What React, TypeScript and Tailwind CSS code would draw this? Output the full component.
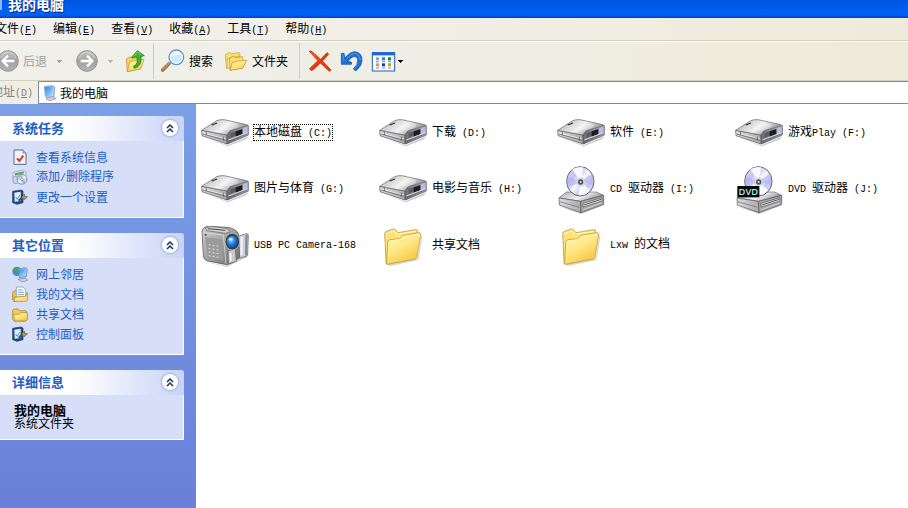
import { useState } from "react";
import type { ReactNode } from "react";

// Latin runs sit on a half-width grid next to the full-width characters
function Label({ text }: { text: string }) {
  return (
    <span className="whitespace-pre">
      {text.split(/([\x20-\x7e]+)/).map((part, i) =>
        /^[\x20-\x7e]+$/.test(part) ? (
          <span key={i} className="font-['Liberation_Mono','Noto_Sans_CJK_SC',monospace] text-[10px]">
            {part}
          </span>
        ) : (
          part
        )
      )}
    </span>
  );
}

function Gradients() {
  return (
    <svg className="absolute h-0 w-0" aria-hidden="true">
      <defs>
        <linearGradient id="metalTop" x1="0" y1="0" x2="1" y2="0.4">
          <stop offset="0" stopColor="#a6a6a8" />
          <stop offset="0.4" stopColor="#dcdcdd" />
          <stop offset="0.6" stopColor="#f2f2f3" />
          <stop offset="1" stopColor="#8f8f94" />
        </linearGradient>
        <linearGradient id="metalSide" x1="0" y1="0" x2="1" y2="0">
          <stop offset="0" stopColor="#dededf" />
          <stop offset="1" stopColor="#aaaaad" />
        </linearGradient>
        <linearGradient id="metalFront" x1="0" y1="0" x2="1" y2="0">
          <stop offset="0" stopColor="#6d6d72" />
          <stop offset="1" stopColor="#b4b4c4" />
        </linearGradient>
        <linearGradient id="folderFront" x1="0" y1="0" x2="0.6" y2="1">
          <stop offset="0" stopColor="#fff6b4" />
          <stop offset="0.5" stopColor="#ffe988" />
          <stop offset="1" stopColor="#f4c742" />
        </linearGradient>
        <linearGradient id="disc" x1="0" y1="0" x2="1" y2="1">
          <stop offset="0" stopColor="#dcdcf8" />
          <stop offset="0.3" stopColor="#c3c3f3" />
          <stop offset="0.5" stopColor="#f8f8ff" />
          <stop offset="0.7" stopColor="#c6c6f6" />
          <stop offset="1" stopColor="#e6e6fb" />
        </linearGradient>
        <linearGradient id="grayBall" x1="0" y1="0" x2="0" y2="1">
          <stop offset="0" stopColor="#c4c4c4" />
          <stop offset="0.5" stopColor="#a2a2a2" />
          <stop offset="1" stopColor="#b4b4b4" />
        </linearGradient>
        <radialGradient id="lens" cx="0.4" cy="0.35" r="0.7">
          <stop offset="0" stopColor="#8fd0ff" />
          <stop offset="0.5" stopColor="#1f7ce0" />
          <stop offset="1" stopColor="#083a8c" />
        </radialGradient>
        <linearGradient id="blueScreen" x1="0" y1="0" x2="1" y2="1">
          <stop offset="0" stopColor="#2c7be8" />
          <stop offset="0.6" stopColor="#6fc0fb" />
          <stop offset="1" stopColor="#b7e5ff" />
        </linearGradient>
        <linearGradient id="camBody" x1="0" y1="0" x2="1" y2="1">
          <stop offset="0" stopColor="#d0d0d0" />
          <stop offset="0.5" stopColor="#a2a2a2" />
          <stop offset="1" stopColor="#6b6b6b" />
        </linearGradient>
      </defs>
    </svg>
  );
}

function DriveIcon() {
  return (
    <svg viewBox="15 348 144 144" className="size-12 shrink-0 overflow-visible" aria-hidden="true">
      <g transform="translate(0 332)">
        <path d="M22 103 L94 128 L157 101 L150 110 L95 131 Z" fill="#b0b0b0" opacity="0.7" />
        <path d="M17 83 L93 97 L93 124 L18 99 Z" fill="url(#metalSide)" stroke="#505054" strokeWidth="2" strokeLinejoin="round" />
        <path d="M93 97 L104 82 L146 68 L157 69 L157 97 L94 124 Z" fill="url(#metalFront)" stroke="#48484e" strokeWidth="2" strokeLinejoin="round" />
        <path d="M17 83 L62 54 Q72 50 84 51 L148 65 Q156 66 155 69 L106 83 Q96 86 93 97 Z" fill="url(#metalTop)" stroke="#636367" strokeWidth="2" strokeLinejoin="round" />
        <path d="M68 80 Q92 60 122 63 Q134 68 112 79 Q94 85 68 80 Z" fill="#fff" opacity="0.3" />
        <path d="M47 67 L63 61" stroke="#2b2b2b" strokeWidth="4" />
        <path d="M20 91 L90 109" stroke="#f4f4f4" strokeWidth="2" />
        <path d="M20 94 L90 113 M31 87 L31 97 M82 102 L82 114" stroke="#4c4c50" strokeWidth="2" />
        <path d="M104 91 L120 86 L120 99 L103 106 Z" fill="#5c5c62" />
        <path d="M119 86 L139 79 L139 95 L119 102 Z" fill="#1d1d20" />
        <path d="M141 77 L154 73 L154 93 L141 98 Z" fill="#bdb9e6" />
        <path d="M97 112 L154 90" stroke="#d9d9de" strokeWidth="3" />
        <path d="M97 117 L154 94" stroke="#5a5a60" strokeWidth="2" />
      </g>
    </svg>
  );
}

function DiscIcon({ dvd }: { dvd?: boolean }) {
  return (
    <svg viewBox="21 180 144 144" className="size-12 shrink-0 overflow-visible" aria-hidden="true">
      <path d="M30 308 L94 330 L163 303 L158 300 L92 322 Z" fill="#b5b5b5" opacity="0.7" />
      <path d="M27 282 L49 264 L139 264 L161 274 L92 292 Z" fill="url(#metalTop)" stroke="#66666a" strokeWidth="2" strokeLinejoin="round" />
      <path d="M27 282 L92 292 L93 326 L28 303 Z" fill="url(#metalSide)" stroke="#515155" strokeWidth="2" strokeLinejoin="round" />
      <path d="M92 292 L161 274 L161 301 L93 326 Z" fill="#a9a9ac" stroke="#515155" strokeWidth="2" strokeLinejoin="round" />
      <path d="M29 293 L88 310" stroke="#66666a" strokeWidth="2" />
      <path d="M99 298 L156 281 L156 291 L99 309 Z" fill="#f2f2f4" stroke="#4b4b4f" strokeWidth="2" />
      <path d="M101 303 L154 286" stroke="#4b4b50" strokeWidth="3" />
      <path d="M100 317 L155 297" stroke="#dededf" strokeWidth="2" />
      <ellipse cx="91" cy="232" rx="41" ry="44" fill="url(#disc)" stroke="#62626e" strokeWidth="3" />
      <path d="M91 232 L67 196 Q84 187 100 190 Z M91 232 L86 274 Q108 275 120 258 Z" fill="#fff" opacity="0.85" />
      <path d="M91 232 L53 218 Q48 238 56 252 Z" fill="#aaaaf0" opacity="0.55" />
      <path d="M91 232 L125 210 Q133 225 129 244 Z" fill="#aaaaf0" opacity="0.5" />
      <circle cx="92" cy="234" r="13" fill="#dddde5" stroke="#b0b0c0" strokeWidth="1" />
      <circle cx="92" cy="234" r="8" fill="#505057" />
      <circle cx="92" cy="234" r="3" fill="#e8e8ee" />
      {dvd && (
        <>
          <rect x="28" y="246" width="66" height="34" fill="#050505" />
          <text x="61" y="273" textAnchor="middle" fontFamily="Open Sans, sans-serif" fontSize="28" fontWeight="600" fill="#a9f0ee">
            DVD
          </text>
        </>
      )}
    </svg>
  );
}

function FolderIcon() {
  return (
    <svg viewBox="27 348 144 144" className="size-12 shrink-0 overflow-visible" aria-hidden="true">
      <path d="M52 481 L144 464 L154 392 L157 396 L146 468 L60 486 Z" fill="#a9a9a9" opacity="0.5" />
      <path d="M44 389 Q44 384 49 382 L70 375 Q74 374 77 378 L84 386 L136 377 Q143 376 143 382 L143 394 L134 462 L51 480 Q48 480 48 476 Z" fill="#fbe27c" stroke="#b48a22" strokeWidth="2" />
      <path d="M48 391 L71 380 L81 391 L138 382" fill="none" stroke="#fff6c0" strokeWidth="3" />
      <path d="M53 414 Q54 408 61 407 L89 404 L99 394 L147 386 Q153 386 152 392 L141 460 Q140 464 136 465 L52 481 Q49 481 50 477 Z" fill="url(#folderFront)" stroke="#b88c20" strokeWidth="2" />
      <path d="M57 415 Q58 411 64 410 L91 407 L101 398 L147 390" fill="none" stroke="#fffbe0" strokeWidth="2" />
    </svg>
  );
}

function CameraIcon() {
  return (
    <svg viewBox="15 348 144 144" className="size-12 shrink-0 overflow-visible" aria-hidden="true">
      <path d="M30 474 L90 485 L132 462 L155 452 L152 460 L92 489 Z" fill="#9a9a9a" opacity="0.5" />
      <path d="M128 396 L152 389 Q157 389 157 394 L155 452 Q155 456 151 457 L128 463 Z" fill="#cfcfdf" stroke="#55555c" strokeWidth="2" />
      <path d="M134 400 L140 397 L139 452 L134 455 Z" fill="#f8f8fc" />
      <path d="M148 394 L155 391 L153 453 L147 455 Z" fill="#898994" />
      <path d="M18 382 Q20 370 32 367 L96 370 Q118 374 127 388 L131 458 Q120 474 92 482 L34 471 Q22 466 22 455 Z" fill="url(#camBody)" stroke="#4a4a4c" strokeWidth="2" />
      <path d="M29 372 Q40 365 52 368 L86 372 Q98 375 103 384 L88 388 L32 380 Z" fill="#cfcfcf" stroke="#5c5c5c" strokeWidth="2" />
      <path d="M36 374 L88 379" stroke="#4c4c4c" strokeWidth="3" />
      <path d="M22 386 L82 393 L90 480" fill="none" stroke="#e2e2e2" strokeWidth="2" />
      <path d="M28 400 L76 407 L83 470 L37 462 Z" fill="#9c9c9c" stroke="#858585" strokeWidth="1" />
      {[425, 436, 447, 458].map((y) => (
        <path key={y} d={`M38 ${y - 3} l5 1 M50 ${y - 1} l5 1 M62 ${y + 1} l5 1`} stroke="#e6e6e6" strokeWidth="3" />
      ))}
      <circle cx="29" cy="392" r="3" fill="#444" />
      <path d="M96 440 L118 434 L121 472 L97 480 Z" fill="#c9c9cb" stroke="#58585a" strokeWidth="2" />
      <path d="M101 447 L106 446 L107 471 L102 473 Z" fill="#f3f3f3" />
      <ellipse cx="109" cy="413" rx="22" ry="25" fill="#3b3b3e" stroke="#b2b2b4" strokeWidth="3" />
      <ellipse cx="109" cy="414" rx="17" ry="19" fill="url(#lens)" />
      <ellipse cx="104" cy="406" rx="6" ry="4" fill="#e6f6ff" opacity="0.8" />
    </svg>
  );
}

function BallIcon({ flip }: { flip?: boolean }) {
  return (
    <svg viewBox="0 0 66 66" className={flip ? "size-[22px] shrink-0 -scale-x-100" : "size-[22px] shrink-0"} aria-hidden="true">
      <circle cx="33" cy="33" r="31" fill="url(#grayBall)" stroke="#959595" strokeWidth="3" />
      <path d="M11 24 Q18 8 34 7 Q50 8 56 24" fill="none" stroke="#d6d6d6" strokeWidth="3" />
      <path d="M52 33 H18 M33 17 L17 33 L33 49" fill="none" stroke="#fff" strokeWidth="7" />
    </svg>
  );
}

function UpIcon() {
  return (
    <svg viewBox="375 148 60 66" className="h-[22px] w-5" aria-hidden="true">
      <path d="M379 175 L390 168 L396 173 L424 169 L420 204 L382 213 Z" fill="#f6d765" stroke="#b58d27" strokeWidth="2" />
      <path d="M389 183 L407 179 L432 176 L422 205 L382 213 Z" fill="url(#folderFront)" stroke="#b58d27" strokeWidth="2" />
      <path d="M400 197 Q417 190 410 169 L394 171 L412 150 L433 165 L422 168 Q428 195 403 203 Z" fill="#3eb32f" stroke="#187212" strokeWidth="2" strokeLinejoin="round" />
      <path d="M402 167 L412 154 L424 163" fill="none" stroke="#8fe07c" strokeWidth="2" />
    </svg>
  );
}

function SearchIcon() {
  return (
    <svg viewBox="483 148 72 72" className="size-6" aria-hidden="true">
      <path d="M488 211 L507 192" stroke="#8c5630" strokeWidth="10" strokeLinecap="round" />
      <path d="M488 210 L506 192" stroke="#d98f55" strokeWidth="6" strokeLinecap="round" />
      <path d="M504 194 L511 187" stroke="#8fa3b8" strokeWidth="6" />
      <circle cx="529" cy="173" r="22" fill="#c9ecfc" stroke="#6c93bd" strokeWidth="4" />
      <circle cx="529" cy="173" r="18" fill="none" stroke="#eefaff" strokeWidth="3" />
      <path d="M515 171 Q517 158 530 157 Q540 158 542 166 Q528 162 515 171 Z" fill="#fff" />
    </svg>
  );
}

function FoldersIcon() {
  return (
    <svg viewBox="672 152 72 66" className="h-[22px] w-6" aria-hidden="true">
      <path d="M676 166 L689 159 L694 163 L718 160 L720 166 L718 194 L680 207 Z" fill="#fbe070" stroke="#c59a2a" strokeWidth="2" />
      <path d="M682 178 L697 173 L719 170 L714 199 L681 207 Z" fill="#fff0a0" stroke="#c59a2a" strokeWidth="2" />
      <path d="M688 178 L700 170 L706 175 L728 172 L729 180 L724 204 L690 213 Z" fill="#fbdf70" stroke="#b88d26" strokeWidth="2" />
      <path d="M697 190 L714 185 L740 183 L728 207 L690 213 Z" fill="url(#folderFront)" stroke="#b88d26" strokeWidth="2" />
    </svg>
  );
}

function DeleteIcon() {
  return (
    <svg viewBox="24 148 72 66" className="h-[22px] w-6" aria-hidden="true">
      <path d="M28 152 Q34 149 38 155 L62 176 L81 156 L86 160 L67 181 L93 208 L89 212 L61 187 L38 208 Q31 211 29 204 L54 180 Z" fill="#ea3a0c" stroke="#d83208" strokeWidth="3" strokeLinejoin="round" />
      <path d="M33 155 L59 178" stroke="#ff8052" strokeWidth="2" />
    </svg>
  );
}

function UndoIcon() {
  return (
    <svg viewBox="120 148 69 66" className="h-[22px] w-[23px]" aria-hidden="true">
      <path d="M124 158 L132 158 L135 173 Q148 153 165 153 Q187 156 186 180 Q185 197 167 211 L160 205 Q175 192 173 177 Q171 166 160 168 Q151 171 144 182 L155 185 L154 191 L124 191 Z" fill="#1e72d2" stroke="#0d479f" strokeWidth="2" strokeLinejoin="round" />
      <path d="M128 161 L132 180 M141 174 Q152 157 167 158 Q180 163 181 178" fill="none" stroke="#6bb2f4" strokeWidth="2" />
    </svg>
  );
}

function ViewsIcon() {
  return (
    <svg viewBox="213 152 75 63" className="h-[21px] w-[25px]" aria-hidden="true">
      <rect x="217" y="157" width="67" height="55" fill="#f5faff" stroke="#1f5fc4" strokeWidth="3" />
      <rect x="216" y="156" width="69" height="9" fill="#1c66d8" />
      <path d="M228 171 h9 v9 h-9z" fill="#8fa0c8" />
      <path d="M246 171 h9 v9 h-9z" fill="#2a7fdc" />
      <path d="M264 171 h9 v9 h-9z" fill="#15862a" />
      <path d="M228 189 h9 v9 h-9z" fill="#e58a70" />
      <path d="M246 189 h9 v9 h-9z" fill="#1a3fa0" />
      <path d="M264 189 h9 v9 h-9z" fill="#c2a024" />
      <path d="M228 184 h9 M246 184 h9 M264 184 h9 M228 203 h9 M246 203 h9 M264 203 h9" stroke="#8b93a3" strokeWidth="3" />
    </svg>
  );
}

function Caret({ className }: { className?: string }) {
  return (
    <svg viewBox="0 0 5 3" className={`h-[3px] w-[5px] ${className ?? ""}`} shapeRendering="crispEdges" aria-hidden="true">
      <path d="M0 0 H5 L2.5 3 Z" fill="currentColor" />
    </svg>
  );
}

function ComputerIcon() {
  return (
    <svg viewBox="0 0 48 48" className="size-4 shrink-0" aria-hidden="true">
      <path d="M14 37 L32 34 L42 41 L24 47 L13 43 Z" fill="#d4d4dc" stroke="#85858f" strokeWidth="2" />
      <path d="M7 4 L32 2 L38 6 L36 35 L15 38 L10 34 Z" fill="#b9cbe8" stroke="#6f86b0" strokeWidth="2" />
      <path d="M9 7 L32 4 L32 32 L12 34 Z" fill="url(#blueScreen)" />
    </svg>
  );
}

function InfoIcon() {
  return (
    <svg viewBox="0 0 48 48" className="size-4 shrink-0" aria-hidden="true">
      <path d="M6 3 H33 L42 12 V46 H6 Z" fill="#f4f5fc" stroke="#5a6884" strokeWidth="3" />
      <path d="M33 3 V12 H42" fill="#cbd4e8" stroke="#5a6884" strokeWidth="2" />
      <path d="M15 28 L22 36 L34 20" fill="none" stroke="#d8381f" strokeWidth="6" />
    </svg>
  );
}

function ProgramsIcon() {
  return (
    <svg viewBox="0 0 48 48" className="size-4 shrink-0" aria-hidden="true">
      <path d="M3 10 L34 3 L42 9 V20 L12 34 L3 30 Z" fill="#e9edf4" stroke="#8792a8" strokeWidth="2" />
      <path d="M8 13 L35 7 L36 13 L9 20 Z" fill="#5da66e" />
      <path d="M3 24 L24 20 V41 L9 44 L3 40 Z" fill="#cfd6e6" stroke="#7c89a6" strokeWidth="2" />
      <circle cx="30" cy="31" r="15" fill="url(#disc)" stroke="#71739c" strokeWidth="2" />
      <path d="M30 31 L20 20 L30 17 Z M30 31 L42 40 L33 45 Z" fill="#86cf96" />
      <circle cx="30" cy="31" r="4" fill="#fff" stroke="#71739c" strokeWidth="2" />
    </svg>
  );
}

function SettingsIcon() {
  return (
    <svg viewBox="0 0 48 48" className="size-4 shrink-0" aria-hidden="true">
      <path d="M2 7 L27 3 L33 6 V41 L15 46 L2 41 Z" fill="#1d4b86" stroke="#163662" strokeWidth="2" />
      <path d="M7 11 L26 8 V36 L8 38 Z" fill="#e4f1fd" />
      <path d="M11 24 L16 31 L23 18" fill="none" stroke="#4e86c6" strokeWidth="3" />
      <path d="M20 35 L33 23" stroke="#274f85" strokeWidth="6" />
      <path d="M30 23 L37 15 L38 22 L46 23 L39 31 L31 30 Z" fill="#b99a5a" stroke="#5d5035" strokeWidth="2" />
    </svg>
  );
}

function NetworkIcon() {
  return (
    <svg viewBox="0 0 48 48" className="size-4 shrink-0" aria-hidden="true">
      <circle cx="15" cy="16" r="14" fill="#3b8ed6" />
      <path d="M3 10 Q12 0 20 4 L17 14 L8 18 Z M6 21 L16 20 L17 30 Q8 28 6 21 Z" fill="#49a84a" />
      <path d="M18 40 L40 36 L47 43 L30 48 Z" fill="#cfcfe0" stroke="#7e7e92" strokeWidth="2" />
      <path d="M17 9 L41 5 L46 9 L43 32 L22 35 Z" fill="#a9c4ea" stroke="#5b78b0" strokeWidth="2" />
      <path d="M19 11 L41 8 L40 29 L22 32 Z" fill="url(#blueScreen)" />
    </svg>
  );
}

function DocumentsIcon() {
  return (
    <svg viewBox="0 0 48 48" className="size-4 shrink-0" aria-hidden="true">
      <path d="M2 19 L10 13 H14 V43 L6 46 L2 42 Z" fill="#f2c544" stroke="#a07918" strokeWidth="2" />
      <path d="M13 3 H33 L41 11 V36 H13 Z" fill="#fff" stroke="#6d84ad" strokeWidth="2" />
      <path d="M18 12 H32 M18 19 H36 M18 26 H36" stroke="#6fa3da" strokeWidth="3" />
      <path d="M7 33 L40 31 L46 20 V42 L43 46 H6 Z" fill="#ffe27c" stroke="#a07918" strokeWidth="2" />
    </svg>
  );
}

function SmallFolderIcon() {
  return (
    <svg viewBox="0 0 48 48" className="size-4 shrink-0" aria-hidden="true">
      <path d="M2 13 L6 9 H18 L22 14 H41 L44 18 V42 L41 45 H6 L2 40 Z" fill="#f5cd50" stroke="#9c7818" strokeWidth="2" />
      <path d="M5 25 H22 L26 20 H46 V41 L42 45 H9 Z" fill="url(#folderFront)" stroke="#a8811c" strokeWidth="2" />
    </svg>
  );
}

const menus = [
  ["文件", "F"],
  ["编辑", "E"],
  ["查看", "V"],
  ["收藏", "A"],
  ["工具", "T"],
  ["帮助", "H"],
];

const items = [
  { name: "本地磁盘 (C:)", icon: <DriveIcon /> },
  { name: "下载 (D:)", icon: <DriveIcon /> },
  { name: "软件 (E:)", icon: <DriveIcon /> },
  { name: "游戏Play (F:)", icon: <DriveIcon /> },
  { name: "图片与体育 (G:)", icon: <DriveIcon /> },
  { name: "电影与音乐 (H:)", icon: <DriveIcon /> },
  { name: "CD 驱动器 (I:)", icon: <DiscIcon /> },
  { name: "DVD 驱动器 (J:)", icon: <DiscIcon dvd /> },
  { name: "USB PC Camera-168", icon: <CameraIcon /> },
  { name: "共享文档", icon: <FolderIcon /> },
  { name: "Lxw 的文档", icon: <FolderIcon /> },
];

const tasks = [
  { name: "查看系统信息", icon: <InfoIcon /> },
  { name: "添加/删除程序", icon: <ProgramsIcon /> },
  { name: "更改一个设置", icon: <SettingsIcon /> },
];

const places = [
  { name: "网上邻居", icon: <NetworkIcon /> },
  { name: "我的文档", icon: <DocumentsIcon /> },
  { name: "共享文档", icon: <SmallFolderIcon /> },
  { name: "控制面板", icon: <SettingsIcon /> },
];

function Panel({ title, children }: { title: string; children: ReactNode }) {
  const [open, setOpen] = useState(true);

  return (
    <section>
      <h2 className="flex h-[25px] items-center justify-between rounded-tr-[3px] bg-linear-to-r from-white from-40% to-[#c8d4f7] pr-1.5 pb-0.5 pl-3 text-[13px] font-bold text-[#215dc6]">
        {title}
        <button
          type="button"
          aria-label={title}
          aria-expanded={open}
          onClick={() => setOpen(!open)}
          className="grid size-4 place-items-center rounded-full bg-white shadow-[0_0_2px_1px_#a3b0d4]"
        >
          <svg viewBox="0 0 10 10" className={open ? "size-2.5" : "size-2.5 rotate-180"} aria-hidden="true">
            <path d="M2 5 L5 2 L8 5 M2 9 L5 6 L8 9" fill="none" stroke="#16316e" strokeWidth="1.5" />
          </svg>
        </button>
      </h2>
      {open && <div className="border-r border-b border-white bg-[#d6dff7] pb-2.5 pl-3">{children}</div>}
    </section>
  );
}

function LinkList({ links }: { links: { name: string; icon: ReactNode }[] }) {
  return (
    <ul className="pt-1.5">
      {links.map((link) => (
        <li key={link.name} className="h-5">
          <a href="#" className="flex h-5 items-center gap-2 text-[#215dc6] hover:underline">
            {link.icon}
            <Label text={link.name} />
          </a>
        </li>
      ))}
    </ul>
  );
}

export default function App() {
  const [selected, setSelected] = useState(items[0].name);
  const [address, setAddress] = useState("我的电脑");

  return (
    <div className="flex min-h-screen flex-col overflow-hidden bg-white font-['Noto_Sans_CJK_SC',sans-serif] text-xs leading-3 text-black">
      <Gradients />
      <header className="flex h-[18px] items-start bg-linear-to-b from-[#0054e0] via-[#0062f8] via-80% to-[#0040c8]">
        <span className="mr-1.5 h-2.5 w-0.5 bg-[#8fb4ee]" />
        <h1 className="text-sm leading-2 font-bold text-white [text-shadow:1px_1px_#0a2a80]">我的电脑</h1>
      </header>

      <nav className="-ml-[5px] flex h-[23px] items-center gap-4 border-b border-[#d2cfc0] bg-linear-to-r from-[#f1f1ef] to-[#efebdb]">
        {menus.map(([name, key]) => (
          <button key={key} type="button" className="whitespace-nowrap">
            {name}
            <span className="font-['Liberation_Mono',monospace] text-[10px]">
              (<u>{key}</u>)
            </span>
          </button>
        ))}
      </nav>

      <div className="-ml-[3px] flex h-10 items-center border-t border-b border-t-white border-b-[#d2cfc0] bg-linear-to-r from-[#f0f0ec] to-[#efebdb]">
        <button type="button" disabled className="flex items-center gap-1 text-[#a3a297]">
          <BallIcon />
          后退
          <Caret className="ml-1.5" />
        </button>
        <button type="button" disabled aria-label="前进" className="ml-3.5 flex items-center gap-2.5 text-[#b5b4aa]">
          <BallIcon flip />
          <Caret />
        </button>
        <button type="button" aria-label="向上" className="ml-3">
          <UpIcon />
        </button>
        <span className="mr-[7px] ml-2 h-9 w-px bg-[#cfccbe]" />
        <button type="button" className="flex items-center gap-1">
          <SearchIcon />
          搜索
        </button>
        <button type="button" className="ml-[11px] flex items-center gap-1">
          <FoldersIcon />
          文件夹
        </button>
        <span className="mr-2 ml-[11px] h-9 w-px bg-[#cfccbe]" />
        <button type="button" aria-label="删除">
          <DeleteIcon />
        </button>
        <button type="button" aria-label="撤消" className="ml-2">
          <UndoIcon />
        </button>
        <button type="button" aria-label="查看方式" className="ml-2 flex items-center gap-0.5">
          <ViewsIcon />
          <Caret className="text-black" />
        </button>
      </div>

      <div className="-ml-[9px] flex h-[23px] items-stretch bg-[#efede4]">
        <label htmlFor="address" className="flex w-[47px] items-center text-[#85847a]">
          <span className="whitespace-nowrap">
            地址
            <span className="font-['Liberation_Mono',monospace] text-[10px]">
              (<u>D</u>)
            </span>
          </span>
        </label>
        <div className="flex flex-1 items-center gap-0.5 border border-r-0 border-[#7e8a96] bg-white pl-[3px]">
          <ComputerIcon />
          <input
            id="address"
            value={address}
            onChange={(e) => setAddress(e.target.value)}
            className="h-4 min-w-0 flex-1 bg-transparent outline-none"
          />
        </div>
      </div>

      <div className="flex flex-1">
        <aside className="flex w-[196px] shrink-0 flex-col gap-[15px] bg-linear-to-b from-[#7ba0e6] to-[#6a80da] pt-3 pr-3">
          <Panel title="系统任务">
            <LinkList links={tasks} />
          </Panel>
          <Panel title="其它位置">
            <LinkList links={places} />
          </Panel>
          <Panel title="详细信息">
            <div className="pt-2 pl-0.5">
              <p className="text-[13px] leading-[14px] font-bold">我的电脑</p>
              <p>系统文件夹</p>
            </div>
          </Panel>
        </aside>

        <main className="grid flex-1 grid-cols-[repeat(auto-fill,173px)] content-start gap-x-[5px] gap-y-2 pt-1 pl-[5px]">
          {items.map((item) => (
            <button
              key={item.name}
              type="button"
              onClick={() => setSelected(item.name)}
              className="flex h-12 items-center gap-[5px] text-left"
            >
              {item.icon}
              <span className={item.name === selected ? "outline-1 outline-black outline-dotted" : ""}>
                <Label text={item.name} />
              </span>
            </button>
          ))}
        </main>
      </div>
    </div>
  );
}
